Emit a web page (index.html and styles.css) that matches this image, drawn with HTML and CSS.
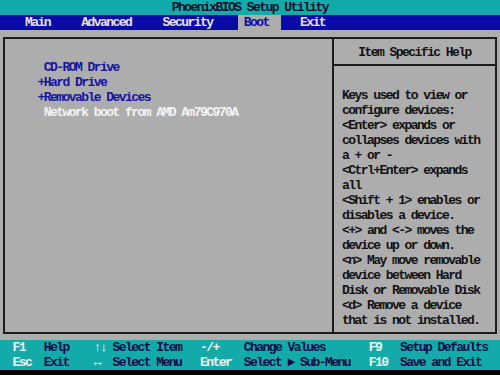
FILE: index.html
```html
<!DOCTYPE html>
<html lang="en">
<head>
    <meta charset="UTF-8">
    <title>PhoenixBIOS Setup Utility</title>
    <link rel="stylesheet" href="styles.css">
</head>
<body>

<div class="screen">
    <div class="title">PhoenixBIOS Setup Utility</div>

    <div class="menu">
        <span class="menu-item">Main</span>
        <span class="menu-item">Advanced</span>
        <span class="menu-item">Security</span>
        <span class="menu-item active">Boot</span>
        <span class="menu-item">Exit</span>
    </div>

    <div class="main">
        <div class="frame">
            <div class="boot-list">
                <div class="boot-item"> CD-ROM Drive</div>
                <div class="boot-item">+Hard Drive</div>
                <div class="boot-item">+Removable Devices</div>
                <div class="boot-item selected"> Network boot from AMD Am79C970A</div>
            </div>
            <div class="help">
                <div class="help-title">Item Specific Help</div>
                <div class="help-text">Keys used to view or
configure devices:
&lt;Enter&gt; expands or
collapses devices with
a + or -
&lt;Ctrl+Enter&gt; expands
all
&lt;Shift + 1&gt; enables or
disables a device.
&lt;+&gt; and &lt;-&gt; moves the
device up or down.
&lt;n&gt; May move removable
device between Hard
Disk or Removable Disk
&lt;d&gt; Remove a device
that is not installed.</div>
            </div>
        </div>
    </div>

    <div class="footer">
        <span class="key">F1</span><span class="desc">Help</span>
        <span class="key">↑↓</span><span class="desc">Select Item</span>
        <span class="key">-/+</span><span class="desc">Change Values</span>
        <span class="key">F9</span><span class="desc">Setup Defaults</span>

        <span class="key">Esc</span><span class="desc">Exit</span>
        <span class="key">↔</span><span class="desc">Select Menu</span>
        <span class="key">Enter</span><span class="desc">Select ► Sub-Menu</span>
        <span class="key">F10</span><span class="desc">Save and Exit</span>
    </div>
</div>

</body>
</html>
```

FILE: styles.css
```css
body {
    margin: 0;
    background: #000;
}
.screen {
    width: 500px;
    height: 375px;
    font-family: "Liberation Mono", "DejaVu Sans Mono", monospace;
    font-size: 13px;
    font-weight: bold;
    letter-spacing: -1.55px;
    line-height: 15px;
    background: #000;
}
.title {
    height: 15px;
    background: #13aaaa;
    color: #10102a;
    text-align: center;
}
.menu {
    height: 15px;
    background: #0a0aa8;
    color: #e4e4ec;
    display: flex;
}
.menu-item {
    padding: 0 6.25px;
    margin-left: 18.75px;
}
.menu-item.active {
    padding-right: 12.5px;
    background: #adadad;
    color: #0a0aa8;
}
.menu-item.active + .menu-item {
    margin-left: 12.5px;
}
.main {
    height: 310px;
    background: #adadad;
    padding: 7px 3px 0 3px;
    box-sizing: border-box;
}
.frame {
    height: 297px;
    border: 2px solid #1c1c1c;
    box-sizing: border-box;
    display: flex;
}
.boot-list {
    width: 329px;
    padding: 21px 0 0 32.5px;
    box-sizing: border-box;
    border-right: 2px solid #1c1c1c;
    color: #1414a0;
}
.boot-item {
    white-space: pre;
}
.boot-item.selected {
    color: #f4f4f4;
}
.help {
    flex: 1;
    color: #111;
}
.help-title {
    height: 27px;
    padding-top: 6px;
    box-sizing: border-box;
    text-align: center;
    border-bottom: 2px solid #1c1c1c;
}
.help-text {
    white-space: pre;
    padding: 22px 0 0 8px;
}
.footer {
    height: 30px;
    background: #13aaaa;
    display: grid;
    grid-template-columns: 31.25px 50px 18.75px 87.5px 43.75px 125px 31.25px 1fr;
    padding-left: 12.5px;
}
.key {
    color: #f4f4f4;
    white-space: pre;
}
.desc {
    color: #0c0c48;
    white-space: pre;
}
```
